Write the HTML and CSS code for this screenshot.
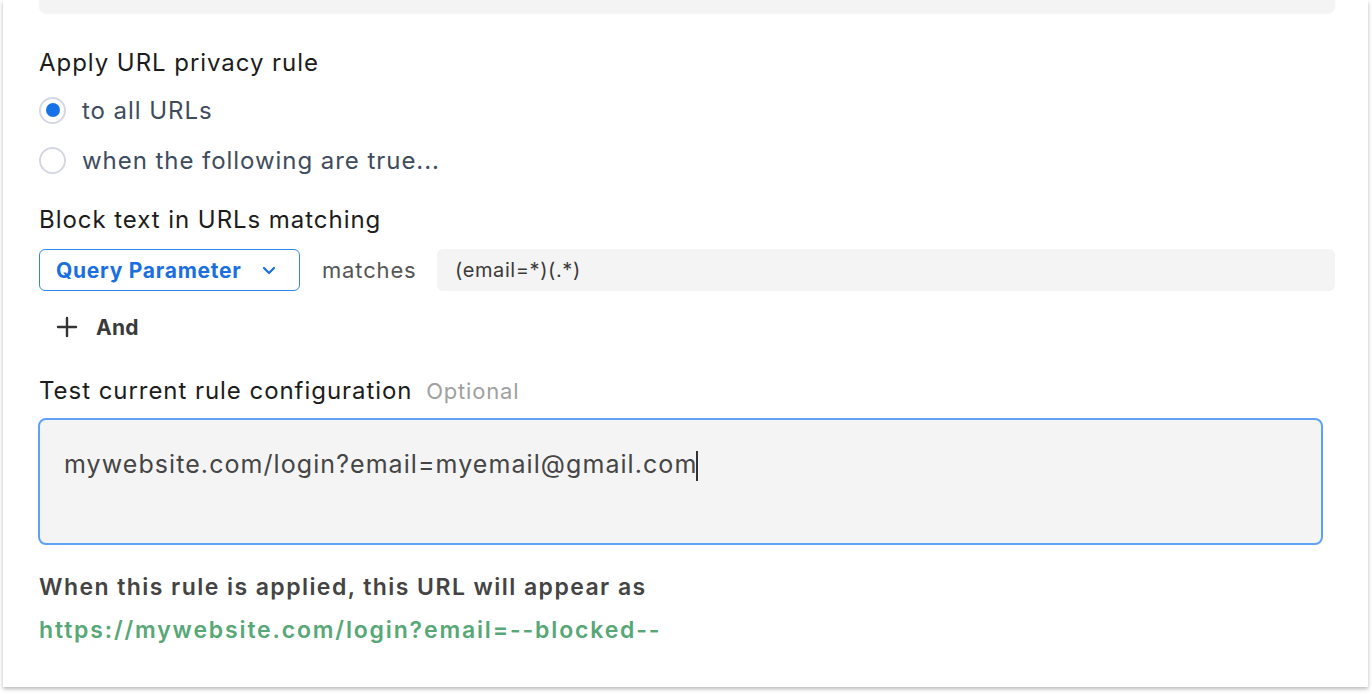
FILE: index.html
```html
<!DOCTYPE html>
<html>
<head>
<meta charset="utf-8">
<link rel="stylesheet" href="styles.css">
</head>
<body>
<div class="card">
  <div class="prev-box"></div>
  <div class="section">
    <div class="heading h-apply">Apply URL privacy rule</div>
    <label class="radio-row">
      <span class="radio checked"><span class="dot"></span></span>
      <span class="radio-label">to all URLs</span>
    </label>
    <label class="radio-row">
      <span class="radio"></span>
      <span class="radio-label">when the following are true...</span>
    </label>
    <div class="heading h-block">Block text in URLs matching</div>
    <div class="rule-row">
      <div class="select">
        <span>Query Parameter</span>
        <svg class="chev" width="14" height="9" viewBox="0 0 14 9"><path d="M2 2 L7 7 L12 2" fill="none" stroke="#1a6fe0" stroke-width="2.2" stroke-linecap="round" stroke-linejoin="round"/></svg>
      </div>
      <div class="op">matches</div>
      <div class="value">(email=*)(.*)</div>
    </div>
    <div class="and">
      <svg width="22" height="22" viewBox="0 0 22 22"><path d="M11 2 V20 M2 11 H20" stroke="#333" stroke-width="2.4" stroke-linecap="round"/></svg>
      <span>And</span>
    </div>
    <div class="heading h-test">Test current rule configuration <span class="optional">Optional</span></div>
    <div class="textarea"><span>mywebsite.com/login?email=myemail@gmail.com</span><span class="caret"></span></div>
    <div class="result-label">When this rule is applied, this URL will appear as</div>
    <div class="result">https://mywebsite.com/login?email=--blocked--</div>
  </div>
</div>
</body>
</html>
```

FILE: styles.css
```css
html, body {
  margin: 0;
  padding: 0;
  background: #ffffff;
}
body {
  font-family: "Inter", "Noto Sans", sans-serif;
  width: 1372px;
  height: 694px;
  overflow: hidden;
}
.card {
  margin: 0 4px 0 3px;
  height: 687px;
  background: #fff;
  box-shadow: 0 2px 4px rgba(0,0,0,0.28);
  padding: 0 33px 0 36px;
  box-sizing: border-box;
}
.prev-box {
  height: 13px;
  background: #f4f4f4;
  border-radius: 0 0 8px 8px;
  box-shadow: 0 1px 2px rgba(0,0,0,0.05);
}
.heading {
  font-size: 24px;
  line-height: 32px;
  letter-spacing: 0.95px;
  color: #1c1c1c;
}
.h-apply { margin-top: 34px; margin-bottom: 6px; }
.radio-row {
  display: flex;
  align-items: center;
  height: 50px;
}
.radio {
  width: 27px;
  height: 27px;
  box-sizing: border-box;
  border: 2.5px solid #d5d7e3;
  border-radius: 50%;
  margin-right: 16px;
  display: flex;
  align-items: center;
  justify-content: center;
  background: #fff;
}
.dot {
  width: 14px;
  height: 14px;
  border-radius: 50%;
  background: #1672e6;
}
.radio-label {
  font-size: 24px;
  letter-spacing: 0.95px;
  color: #3e4c5e;
}
.h-block { margin-top: 19px; }
.rule-row {
  display: flex;
  align-items: center;
  margin-top: 13px;
  height: 42px;
}
.select {
  width: 261px;
  height: 42px;
  box-sizing: border-box;
  border: 1.5px solid #2e86ef;
  border-radius: 6px;
  display: flex;
  align-items: center;
  padding-left: 16px;
  font-size: 21px;
  letter-spacing: 0.73px;
  font-weight: 700;
  color: #1a6fe0;
}
.chev { margin-left: 20px; }
.op {
  margin-left: 22px;
  width: 115px;
  font-size: 22px;
  letter-spacing: 0.85px;
  color: #555;
}
.value {
  flex: 1;
  height: 42px;
  background: #f4f4f4;
  border-radius: 6px;
  display: flex;
  align-items: center;
  padding-left: 18px;
  font-size: 20px;
  letter-spacing: 0.6px;
  color: #3a3a3a;
}
.and {
  display: flex;
  align-items: center;
  height: 32px;
  margin-top: 20px;
  padding-left: 17px;
  font-size: 21px;
  letter-spacing: 0.2px;
  font-weight: 700;
  color: #3a3a3a;
}
.and span { margin-left: 18px; }
.h-test { margin-top: 32px; }
.optional {
  font-size: 22px;
  letter-spacing: 0.8px;
  color: #a0a0a0;
  margin-left: 6px;
}
.textarea {
  margin-top: 11px;
  margin-left: -1px;
  margin-right: 12px;
  height: 127px;
  box-sizing: border-box;
  border: 2px solid #5fa2f3;
  border-radius: 8px;
  background: #f4f4f4;
  padding: 28px 24px 0 24px;
  font-size: 25px;
  letter-spacing: 1.07px;
  line-height: 32px;
  color: #454545;
}
.caret {
  display: inline-block;
  width: 2px;
  height: 30px;
  background: #333;
  vertical-align: middle;
  margin-left: -1px;
}
.result-label {
  margin-top: 26px;
  font-size: 23px;
  letter-spacing: 1.44px;
  line-height: 32px;
  font-weight: 600;
  color: #444;
}
.result {
  margin-top: 11px;
  font-size: 23px;
  letter-spacing: 1.84px;
  line-height: 32px;
  font-weight: 600;
  color: #58a877;
}
```
